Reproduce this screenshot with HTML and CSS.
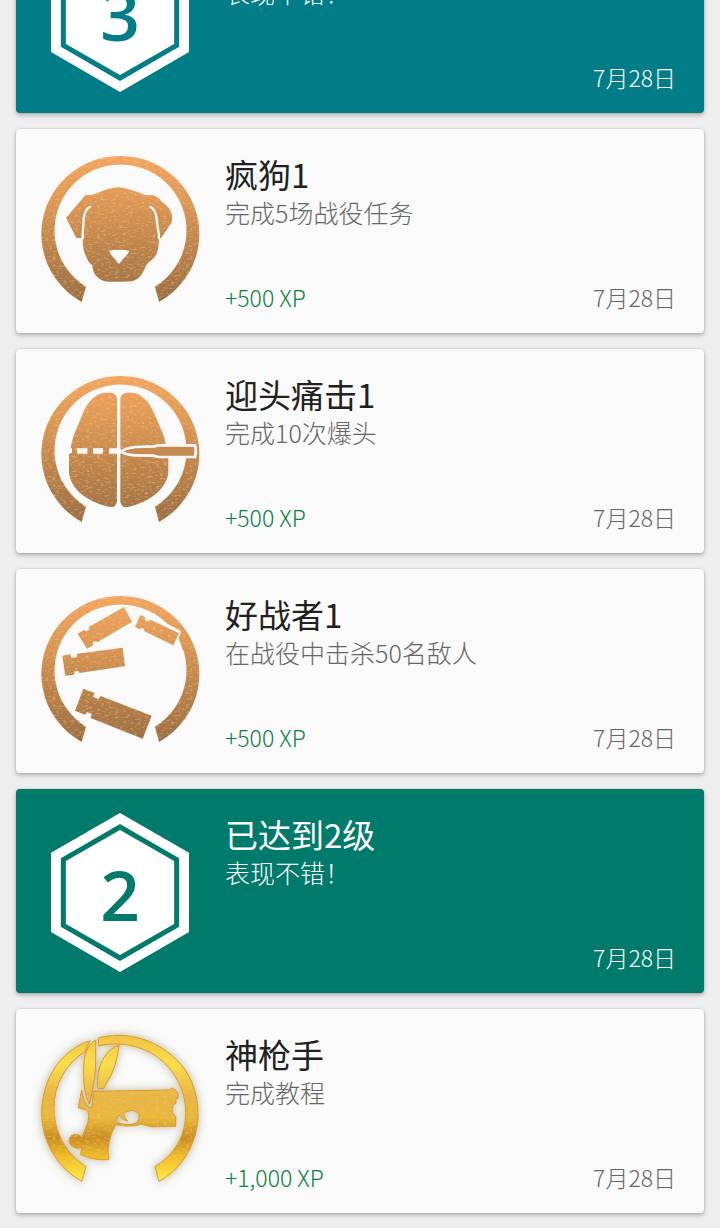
FILE: index.html
```html
<!DOCTYPE html>
<html lang="zh-CN">
<head>
<meta charset="UTF-8">
<meta name="viewport" content="width=device-width, initial-scale=1.0">
<title>成就</title>
<link rel="stylesheet" href="styles.css">
</head>
<body>

<!-- shared gradients and the medal ring -->
<svg class="defs" aria-hidden="true">
  <defs>
    <linearGradient id="bronze" gradientUnits="userSpaceOnUse" x1="0" y1="30" x2="0" y2="475">
      <stop offset="0" stop-color="#f3a662"/>
      <stop offset="0.3" stop-color="#dd9858"/>
      <stop offset="0.6" stop-color="#be854e"/>
      <stop offset="1" stop-color="#986d45"/>
    </linearGradient>
    <linearGradient id="gold" gradientUnits="userSpaceOnUse" x1="0" y1="25" x2="0" y2="475">
      <stop offset="0" stop-color="#f0c040"/>
      <stop offset="0.2" stop-color="#fae048"/>
      <stop offset="0.42" stop-color="#e6b545"/>
      <stop offset="0.56" stop-color="#e8b83c"/>
      <stop offset="0.7" stop-color="#ca8d22"/>
      <stop offset="0.82" stop-color="#efbd28"/>
      <stop offset="1" stop-color="#fff344"/>
    </linearGradient>
    <filter id="grain" x="-5%" y="-5%" width="110%" height="110%" color-interpolation-filters="sRGB">
      <feTurbulence type="fractalNoise" baseFrequency="0.09 0.18" numOctaves="2" seed="4" result="noise"/>
      <feColorMatrix in="noise" type="matrix" values="0 0 0 0 1  0 0 0 0 0.78  0 0 0 0 0.42  1.6 0 0 0 -0.8" result="specks"/>
      <feComposite in="specks" in2="SourceGraphic" operator="in" result="grain"/>
      <feMerge>
        <feMergeNode in="SourceGraphic"/>
        <feMergeNode in="grain"/>
      </feMerge>
    </filter>
    <path id="ring" d="M155 471A237 234 0 1 1 387 471L375 425A198 198 0 1 0 168 425Z"/>
  </defs>
</svg>

<main class="achievements">

  <article class="card level level-3">
    <svg class="icon" viewBox="30 39 480 480" aria-hidden="true">
      <path class="hex" d="M270 39L477 158V396L270 516L63 396V158Z"/>
      <path class="hex-line" d="M270 81L440 179V376L270 474L100 376V179Z"/>
      <text class="number" x="270" y="362">3</text>
    </svg>
    <div class="info">
      <h2 class="title">已达到3级</h2>
      <p class="desc">表现不错！</p>
      <div class="meta"><time class="date">7月28日</time></div>
    </div>
  </article>

  <article class="card">
    <svg class="icon" viewBox="30 24 480 480" aria-hidden="true">
      <g class="bronze">
        <use href="#ring"/>
        <path d="M166 151C178 149 190 151 201 145C224 134 246 128 266 127C292 130 316 138 340 148C350 153 361 149 373 151L389 162C397 174 411 180 420 194C428 207 427 224 424 234L394 278L387 281C386 300 386 315 377 331C368 347 354 350 348 362C339 382 333 397 314 406C304 411 289 410 267 410C244 410 226 412 213 404C196 395 188 382 187 361C176 354 172 343 166 330C158 310 158 296 158 280L150 279H139L108 218Z"/>
      </g>
      <path class="cut-line" d="M180 186C169 190 163 204 161 222C161 244 157 258 158 280M361 186C372 190 378 206 380 222C381 245 387 256 387 280"/>
      <path class="cut" d="M238 317Q268 311 298 317Q293 330 280 341L267 357L255 342Q243 332 238 317Z"/>
    </svg>
    <div class="info">
      <h2 class="title">疯狗1</h2>
      <p class="desc">完成5场战役任务</p>
      <div class="meta"><span class="xp">+500 XP</span><time class="date">7月28日</time></div>
    </div>
  </article>

  <article class="card">
    <svg class="icon" viewBox="30 24 480 480" aria-hidden="true">
      <g class="bronze">
        <use href="#ring"/>
        <path d="M261 100Q258 83 240 83H228C204 84 189 98 178 111C164 128 156 152 148 171C137 198 125 221 123 249L125 263L117 267V322C119 345 132 368 150 384C178 407 212 421 244 427Q257 427 261 411Z"/>
        <path d="M271 100Q274 84 292 83H304C327 84 342 98 354 112C367 130 375 151 384 171C395 196 407 221 409 250L415 279V322C413 347 399 367 381 384C354 407 320 421 288 427Q275 427 271 411Z"/>
      </g>
      <path class="cut" d="M120 250H126V264H120ZM141 250H172V266H141ZM189 250H219V266H189ZM237 250H272V266H237Z"/>
      <path class="bullet" d="M274 260Q287 249 316 246L374 244L385 241H495Q500 257 495 276H385L370 272L316 271Q288 270 274 260Z"/>
    </svg>
    <div class="info">
      <h2 class="title">迎头痛击1</h2>
      <p class="desc">完成10次爆头</p>
      <div class="meta"><span class="xp">+500 XP</span><time class="date">7月28日</time></div>
    </div>
  </article>

  <article class="card">
    <svg class="icon" viewBox="30 24 480 480" aria-hidden="true">
      <g class="bronze">
        <use href="#ring"/>
      </g>
      <path class="cut" d="M384 99L412 116L453 138L446 162L462 177L440 205L420 150Z"/>
      <g class="bronze">
        <path d="M452 150A237 237 0 0 1 470 200L458 194Q453 174 446 163Z"/>
        <path d="M143 146L163 134L168 139L179 134L176 126L282 66L306 110L202 172L198 168L188 172L189 181L171 191Z"/>
        <path d="M331 90L346 97L344 105L355 109L361 104L447 145L430 181L343 139L342 131L333 129L329 133L315 126Z"/>
        <path d="M97 212L122 208L124 218L141 217V206L278 188L285 244L148 264L145 257L132 260L133 269L106 272Z"/>
        <path d="M160 311L194 324L189 335L205 342L212 333L365 392L338 461L182 399L185 387L171 381L165 389L135 377Z"/>
      </g>
    </svg>
    <div class="info">
      <h2 class="title">好战者1</h2>
      <p class="desc">在战役中击杀50名敌人</p>
      <div class="meta"><span class="xp">+500 XP</span><time class="date">7月28日</time></div>
    </div>
  </article>

  <article class="card level level-2">
    <svg class="icon" viewBox="30 39 480 480" aria-hidden="true">
      <path class="hex" d="M270 39L477 158V396L270 516L63 396V158Z"/>
      <path class="hex-line" d="M270 81L440 179V376L270 474L100 376V179Z"/>
      <text class="number" x="270" y="362">2</text>
    </svg>
    <div class="info">
      <h2 class="title">已达到2级</h2>
      <p class="desc">表现不错！</p>
      <div class="meta"><time class="date">7月28日</time></div>
    </div>
  </article>

  <article class="card">
    <svg class="icon glow" viewBox="30 24 480 480" aria-hidden="true">
      <g class="gold">
        <path d="M155 469A235 235 0 0 1 35 265C35 158 98 72 181 47Q169 62 166 79A198 198 0 0 0 72 250C72 322 109 386 168 425Z"/>
        <path d="M205 39C310 10 422 62 474 148C538 265 496 410 387 469L375 425C466 371 492 260 443 166C402 87 306 39 206 63Z"/>
        <path d="M197 45V120C195 161 188 201 178 237C164 211 160 176 161 130C162 93 170 60 197 45Z"/>
        <path d="M267 61C262 101 252 138 236 163L220 191H203C202 163 203 140 213 116C223 91 241 68 267 61Z"/>
        <path fill-rule="evenodd" d="M155 195Q159 231 178 248L187 247L190 199L418 195L426 189L438 196L444 205V220L437 221L438 234L429 241L426 262L437 274V304L365 305L332 297Q317 304 288 303Q269 303 257 298L246 321C239 342 233 367 234 383L237 404L211 404Q178 402 151 389L156 366Q143 374 127 365C112 352 115 331 135 328Q148 327 156 338L174 291Q180 273 173 256L145 248ZM260 291Q287 304 316 295Q329 286 328 269Q319 255 302 257Q288 257 281 266Q284 279 293 289Q276 286 269 271Q258 274 260 291Z"/>
      </g>
    </svg>
    <div class="info">
      <h2 class="title">神枪手</h2>
      <p class="desc">完成教程</p>
      <div class="meta"><span class="xp">+1,000 XP</span><time class="date">7月28日</time></div>
    </div>
  </article>

</main>

</body>
</html>
```
FILE: styles.css
```css
* {
  box-sizing: border-box;
}
body {
  margin: 0;
  background-color: #eeeeee;
  color: #212121;
  font-family: "Noto Sans CJK SC", sans-serif;
  font-weight: 300;
}
.defs {
  display: block;
  width: 0;
  height: 0;
}
/* the list is scrolled part way through its first card */
.achievements {
  display: flex;
  flex-direction: column;
  gap: 16px;
  margin-top: -91px;
  padding: 0 16px 15px;
}
.card {
  display: flex;
  gap: 25px;
  padding: 24px 28px 20px 24px;
  background-color: #fafafa;
  border-radius: 4px;
  box-shadow: 0 2px 4px rgba(0, 0, 0, 0.28), 0 0 2px rgba(0, 0, 0, 0.14);
}
.icon {
  flex: none;
  width: 160px;
  height: 160px;
}
.info {
  flex: 1;
  min-width: 0;
  display: flex;
  flex-direction: column;
}
.title {
  margin: 0;
  font-size: 33px;
  font-weight: 400;
  line-height: 42px;
}
.desc {
  margin: 0;
  font-size: 25px;
  line-height: 34px;
  color: #666666;
}
.meta {
  display: flex;
  margin-top: auto;
  font-size: 23px;
  line-height: 32px;
}
.xp {
  color: #0a8043;
}
.date {
  margin-left: auto;
  color: #666666;
}

/* level cards */
.level,
.level .desc,
.level .date {
  color: #ffffff;
}
.level-3 {
  background-color: #007d87;
}
.level-2 {
  background-color: #007a6b;
}
.hex {
  fill: #ffffff;
}
.hex-line {
  fill: none;
  stroke: #007a6b;
  stroke-width: 15px;
}
.number {
  fill: #007a6b;
  font-family: "Open Sans", sans-serif;
  font-size: 208px;
  font-weight: 600;
  text-anchor: middle;
}
.level-3 .hex-line {
  stroke: #007d87;
}
.level-3 .number {
  fill: #007d87;
}

/* medals */
.bronze {
  fill: url(#bronze);
  filter: url(#grain);
}
.gold {
  fill: url(#gold);
  stroke: #dc962c;
  stroke-width: 3px;
  filter: url(#grain);
}
.glow {
  filter: drop-shadow(0 0 4px rgba(130, 120, 50, 0.5));
}
.cut {
  fill: #fafafa;
}
.cut-line {
  fill: none;
  stroke: #fafafa;
  stroke-width: 7px;
  stroke-linecap: round;
}
.bullet {
  fill: url(#bronze);
  stroke: #fafafa;
  stroke-width: 8px;
}
```
